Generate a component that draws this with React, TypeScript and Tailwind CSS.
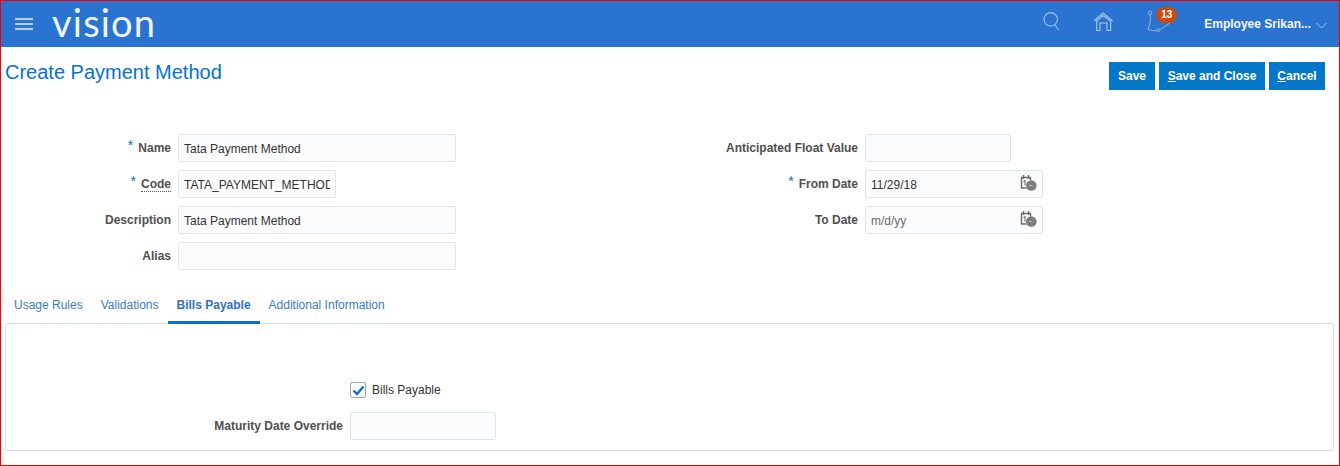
import React from "react";

const LBL = "font-bold text-[#4f4f4f]";

const Input = ({ w, value, muted }: { w: string; value?: string; muted?: boolean }) => (
  <div className={`${w} h-[28px] shrink-0 rounded-[2px] border border-[#dfe4ea] bg-[#fbfcfe] px-[5px] pt-[1px] flex items-center text-[12px] ${muted ? "text-[#6a6a6a]" : "text-[#333333]"}`}>
    <div className="w-full overflow-hidden whitespace-nowrap">{value}</div>
  </div>
);

const CalIcon = () => (
  <svg width="17" height="17" viewBox="0 0 17 17" className="absolute right-[6px] top-[4px]">
    <path d="M1 3.500h10M1.500 3.500v10.500h5M10.500 3.500v3M3.500 1v4M8.500 1v4" fill="none" stroke="#6f6f6f" strokeWidth="1.500" />
    <path d="M3.500 7.500l1.500-.8v4.800" fill="none" stroke="#6f6f6f" strokeWidth="1.100" />
    <circle cx="11.300" cy="11.500" r="5.300" fill="#7d7d7d" />
    <path d="M9 11.500h3.500" stroke="#bbbbbb" strokeWidth="1" />
  </svg>
);

const DateField = ({ value, muted }: { value: string; muted?: boolean }) => (
  <div className="relative">
    <Input w="w-[178px]" value={value} muted={muted} />
    <CalIcon />
  </div>
);

const Row = ({ label, star, dotted, w, children }: { label: string; star?: boolean; dotted?: boolean; w: string; children: React.ReactNode }) => (
  <div className="flex h-[28px] items-center">
    <div className={`${w} shrink-0 whitespace-nowrap pr-[7px] text-right ${LBL}`}>
      {star && <span className="relative -top-[2px] mr-[5px] text-[14px] leading-[12px] font-normal text-[#0572ce]">*</span>}
      <span className={dotted ? "border-b border-dotted border-[#555]" : ""}>{label}</span>
    </div>
    {children}
  </div>
);

const Tab = ({ label, active }: { label: string; active?: boolean }) => (
  <div className={`flex h-[37px] items-center border-b-[3px] px-[9px] pt-[1px] ${active ? "border-[#0572ce] font-bold text-[#2f6fbf]" : "border-transparent text-[#3a7bc8]"}`}>
    {label}
  </div>
);

export default function App() {
  return (
    <div className="h-[466px] w-[1340px] overflow-hidden border border-[#f00000] bg-white text-[12px] leading-[16px]" style={{ fontFamily: '"Liberation Sans", Arial, sans-serif' }}>
      <header className="flex h-[46px] items-start bg-[#2a73d0] text-white">
        <svg width="18" height="12" viewBox="0 0 18 12" className="ml-[14px] mt-[17px]">
          <path d="M0 1h18M0 6h18M0 11h18" stroke="#e4eefb" strokeWidth="1.6" />
        </svg>
        <span className="ml-[19px] text-[38px] leading-[42px] tracking-[1.2px] text-[#f0f5fc]" style={{ fontFamily: 'Lato, sans-serif', fontWeight: 400 }}>vision</span>
        <div className="ml-auto flex items-start">
          <svg width="17" height="20" viewBox="0 0 17 20" className="mt-[10px]">
            <circle cx="7.700" cy="8.300" r="6.700" fill="none" stroke="#9fc1ec" strokeWidth="1.1" />
            <path d="M12 14l3.500 5" stroke="#9fc1ec" strokeWidth="1.1" />
          </svg>
          <svg width="21" height="19" viewBox="0 0 21 19" className="ml-[33px] mt-[11px]">
            <path d="M1 9l9-8 9.600 8M3 9.500l7-6 8 6M3.700 9v9.500H7V11h7v7.500h3.700V9" fill="none" stroke="#a9c8ee" strokeWidth="1.1" />
          </svg>
          <div className="relative ml-[32px] mt-[9px] h-[23px] w-[26px]">
            <svg width="26" height="23" viewBox="0 0 26 23">
              <circle cx="4" cy="3" r="1.800" fill="none" stroke="#8fb6e8" strokeWidth="1" />
              <path d="M4 5c1 5 0 9-2 14 3 1.500 6 2 9 1.500M13.500 20L24 13" fill="none" stroke="#8fb6e8" strokeWidth="1" />
              <circle cx="12.300" cy="20.300" r="1.500" fill="none" stroke="#8fb6e8" strokeWidth="1" />
            </svg>
            <div className="absolute left-[10px] -top-[3px] flex h-[16px] w-[21px] items-center justify-center rounded-full bg-[#cf4a08] text-[10px] font-bold text-white">13</div>
          </div>
          <span className="ml-[32px] mt-[15px] font-bold text-[#f4f8fd]">Employee Srikan...</span>
          <svg width="11" height="7" viewBox="0 0 11 7" className="ml-[5px] mr-[12px] mt-[21px]">
            <path d="M.5 1l5 5 5-5" fill="none" stroke="#9fc1ec" strokeWidth="1" />
          </svg>
        </div>
      </header>

      <div className="flex items-start pl-[4px] pr-[14px]">
        <h1 className="mt-[13px] text-[20px] leading-[24px] text-[#0572ce]">Create Payment Method</h1>
        <div className="ml-auto mt-[15px] flex font-bold text-white">
          <div className="flex h-[28px] w-[46px] items-center justify-center bg-[#0577c9]">Save</div>
          <div className="ml-[4px] flex h-[28px] w-[106px] items-center justify-center bg-[#0577c9]"><span><u>S</u>ave and Close</span></div>
          <div className="ml-[4px] flex h-[28px] w-[56px] items-center justify-center bg-[#0577c9]"><span><u>C</u>ancel</span></div>
        </div>
      </div>

      <div className="mt-[44px] flex">
        <div className="flex flex-col gap-[8px]">
          <Row label="Name" star w="w-[177px]"><Input w="w-[278px]" value="Tata Payment Method" /></Row>
          <Row label="Code" star dotted w="w-[177px]"><Input w="w-[158px]" value="TATA_PAYMENT_METHOD" /></Row>
          <Row label="Description" w="w-[177px]"><Input w="w-[278px]" value="Tata Payment Method" /></Row>
          <Row label="Alias" w="w-[177px]"><Input w="w-[278px]" /></Row>
        </div>
        <div className="ml-[109px] flex flex-col gap-[8px]">
          <Row label="Anticipated Float Value" w="w-[300px]"><Input w="w-[146px]" /></Row>
          <Row label="From Date" star w="w-[300px]"><DateField value="11/29/18" /></Row>
          <Row label="To Date" w="w-[300px]"><DateField value="m/d/yy" muted /></Row>
        </div>
      </div>

      <div className="mt-[17px] pl-[4px]">
        <div className="relative z-10 -mb-[1px] flex">
          <Tab label="Usage Rules" />
          <Tab label="Validations" />
          <Tab label="Bills Payable" active />
          <Tab label="Additional Information" />
        </div>
        <div className="h-[128px] w-[1329px] rounded-[2px] border border-[#d6dfe6] pt-[52px]">
          <div className="flex h-[28px] items-center pl-[344px]">
            <div className="flex h-[16px] w-[16px] items-center justify-center rounded-[2px] border border-[#9aa6b2] bg-[#fbfcfe]">
              <svg width="13" height="11" viewBox="0 0 13 11">
                <path d="M1.500 5.500L5 9l6.500-7.500" fill="none" stroke="#0572ce" strokeWidth="2.400" />
              </svg>
            </div>
            <span className="ml-[6px] text-[#333333]">Bills Payable</span>
          </div>
          <div className="mt-[8px]">
            <Row label="Maturity Date Override" w="w-[344px]"><Input w="w-[146px]" /></Row>
          </div>
        </div>
      </div>
    </div>
  );
}
